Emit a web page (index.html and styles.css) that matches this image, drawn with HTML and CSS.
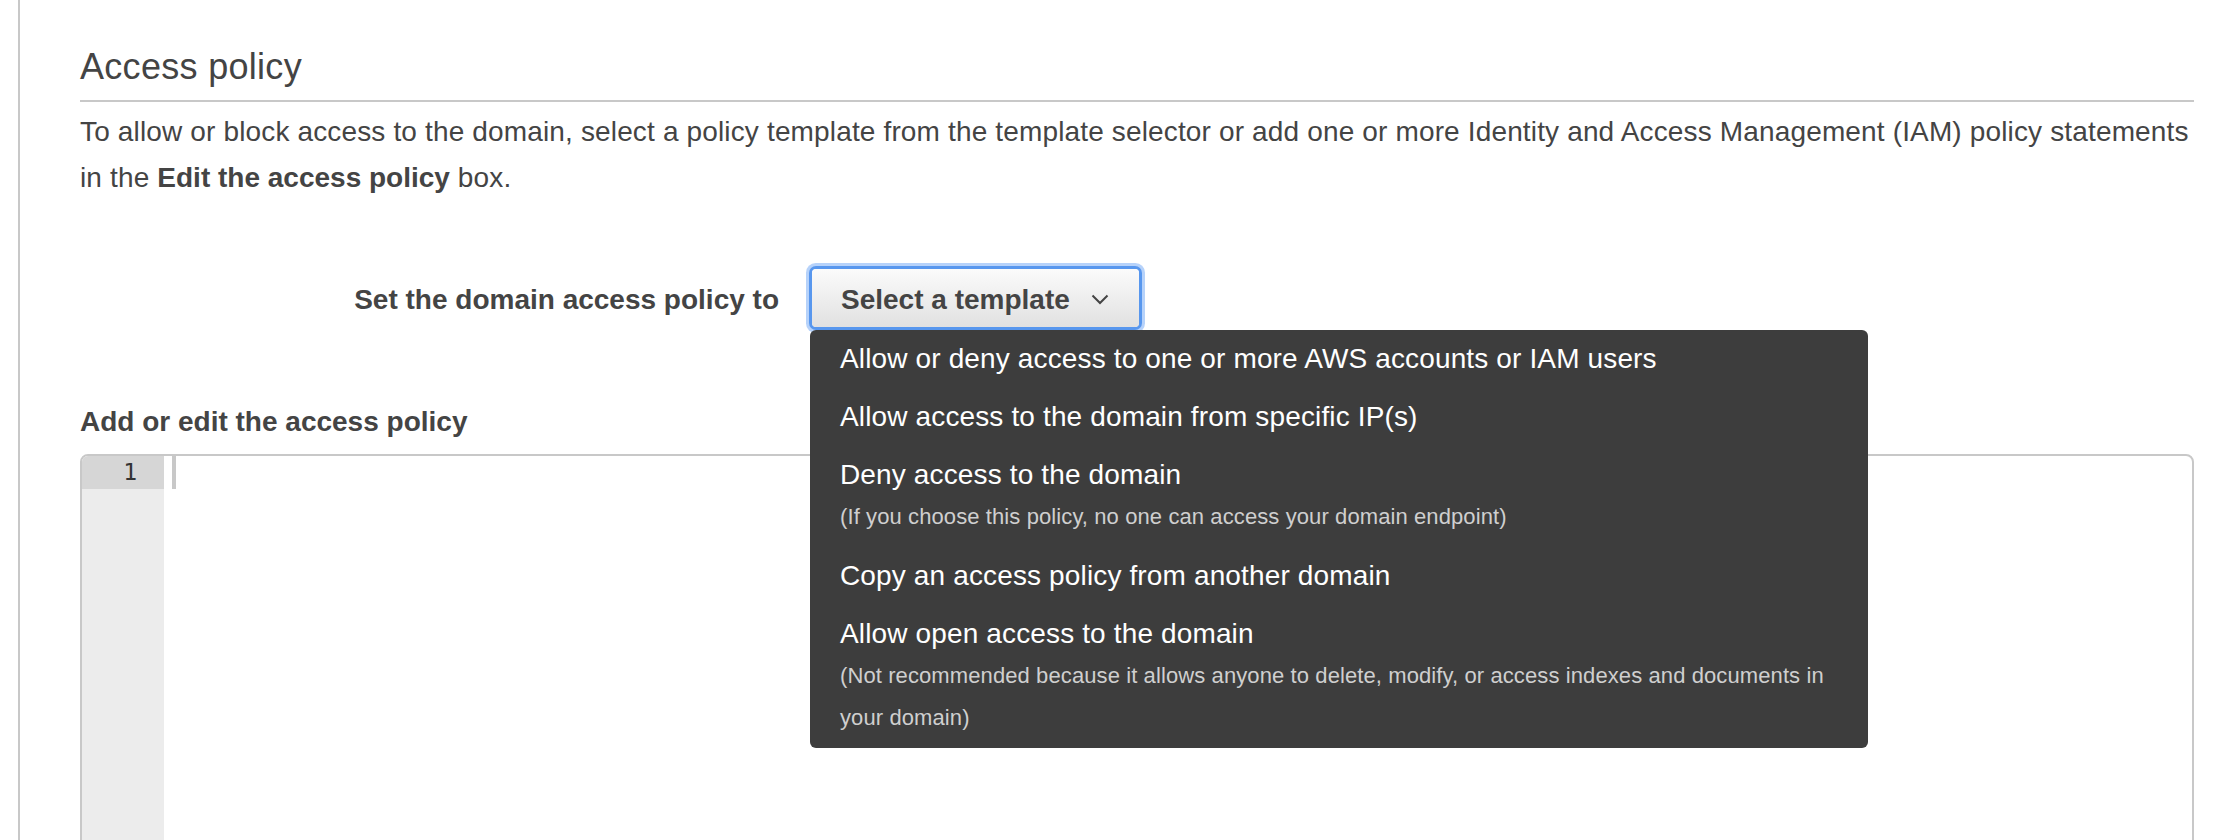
FILE: index.html
```html
<!DOCTYPE html>
<html lang="en">
<head>
<meta charset="utf-8">
<title>Access policy</title>
<link rel="stylesheet" href="styles.css">
</head>
<body>
<div class="panel">
  <h2 class="title">Access policy</h2>
  <p class="desc">To allow or block access to the domain, select a policy template from the template selector or add one or more Identity and Access Management (IAM) policy statements in the <b>Edit the access policy</b> box.</p>

  <div class="form-row">
    <label class="row-label">Set the domain access policy to</label>
    <div class="select-wrap">
      <button class="select-btn" type="button">
        <span class="btn-text">Select a template</span>
        <svg class="chev" width="18" height="11" viewBox="0 0 18 11"><polyline points="1.5,1.5 9,9 16.5,1.5" fill="none" stroke="#444" stroke-width="2"/></svg>
      </button>
      <ul class="menu">
        <li class="item"><div class="main">Allow or deny access to one or more AWS accounts or IAM users</div></li>
        <li class="item"><div class="main">Allow access to the domain from specific IP(s)</div></li>
        <li class="item"><div class="main">Deny access to the domain</div><div class="sub">(If you choose this policy, no one can access your domain endpoint)</div></li>
        <li class="item"><div class="main">Copy an access policy from another domain</div></li>
        <li class="item"><div class="main">Allow open access to the domain</div><div class="sub">(Not recommended because it allows anyone to delete, modify, or access indexes and documents in your domain)</div></li>
      </ul>
    </div>
  </div>

  <div class="editor-label">Add or edit the access policy</div>
  <div class="editor">
    <div class="gutter"><div class="ln active">1</div></div>
    <div class="code"><div class="line"><span class="cursor"></span></div></div>
  </div>
</div>
</body>
</html>
```
FILE: styles.css
```css
* { box-sizing: border-box; }
html, body { margin: 0; padding: 0; background: #fff; }
body {
  font-family: "Liberation Sans", Arial, Helvetica, sans-serif;
  color: #444;
  overflow: hidden;
  height: 840px;
}
.panel {
  margin-left: 18px;
  border-left: 2px solid #c8c8c8;
  padding: 45px 46px 0 60px;
  height: 840px;
}
.title {
  margin: 0;
  font-size: 36px;
  line-height: 44px;
  font-weight: normal;
  letter-spacing: 0.3px;
  color: #444;
  padding-bottom: 11px;
  border-bottom: 2px solid #c8c8c8;
}
.desc {
  margin: 7px 0 0 0;
  font-size: 28px;
  line-height: 46px;
  letter-spacing: 0.15px;
  color: #444;
}
.desc b { font-weight: bold; letter-spacing: 0; color: #444; }
.form-row {
  margin-top: 68px;
  display: grid;
  grid-template-columns: 699px auto;
  column-gap: 33px;
  align-items: center;
  justify-content: start;
}
.row-label {
  justify-self: end;
  padding-top: 4px;
  font-size: 28px;
  font-weight: bold;
  color: #444;
  line-height: 36px;
}
.select-wrap { position: relative; }
.select-btn {
  display: flex;
  align-items: center;
  gap: 21px;
  height: 58px;
  padding: 0 30px 0 29px;
  border: 0;
  border-radius: 4px;
  background: linear-gradient(#fbfbfb, #e1e1e1);
  box-shadow: 0 0 0 3px #5897ee, 0 0 0 6px rgba(110, 165, 245, 0.5);
  font-family: "Liberation Sans", Arial, sans-serif;
  font-size: 28px;
  font-weight: bold;
  color: #444;
}
.btn-text { padding-top: 4px; }
.chev { display: block; margin-top: 3px; }
.menu {
  position: absolute;
  left: -2px;
  top: 61px;
  width: 1058px;
  margin: 0;
  padding: 0;
  list-style: none;
  background: #3d3d3d;
  border-radius: 6px;
  z-index: 5;
}
.item { padding: 8px 30px 9px; }
.main {
  font-size: 28px;
  line-height: 41px;
  letter-spacing: 0.14px;
  color: #fff;
}
.sub {
  margin-top: 1px;
  font-size: 22px;
  line-height: 42px;
  letter-spacing: 0.1px;
  color: #cfcfcf;
}
.editor-label {
  margin-top: 77px;
  font-size: 28px;
  font-weight: bold;
  line-height: 36px;
  color: #444;
}
.editor {
  margin-top: 14px;
  display: flex;
  height: 500px;
  border: 2px solid #c8c8c8;
  border-radius: 8px 8px 0 0;
  overflow: hidden;
}
.gutter {
  width: 82px;
  background: #ececec;
}
.ln {
  height: 33px;
  text-align: right;
  padding-right: 27px;
  font-family: "DejaVu Sans Mono", "Liberation Mono", monospace;
  font-size: 23px;
  line-height: 33px;
  color: #333;
}
.ln.active { background: #d6d6d6; }
.code { flex: 1; padding-left: 8px; }
.line { height: 33px; display: flex; }
.cursor { width: 4px; height: 33px; background: #c8c8c8; }
```
